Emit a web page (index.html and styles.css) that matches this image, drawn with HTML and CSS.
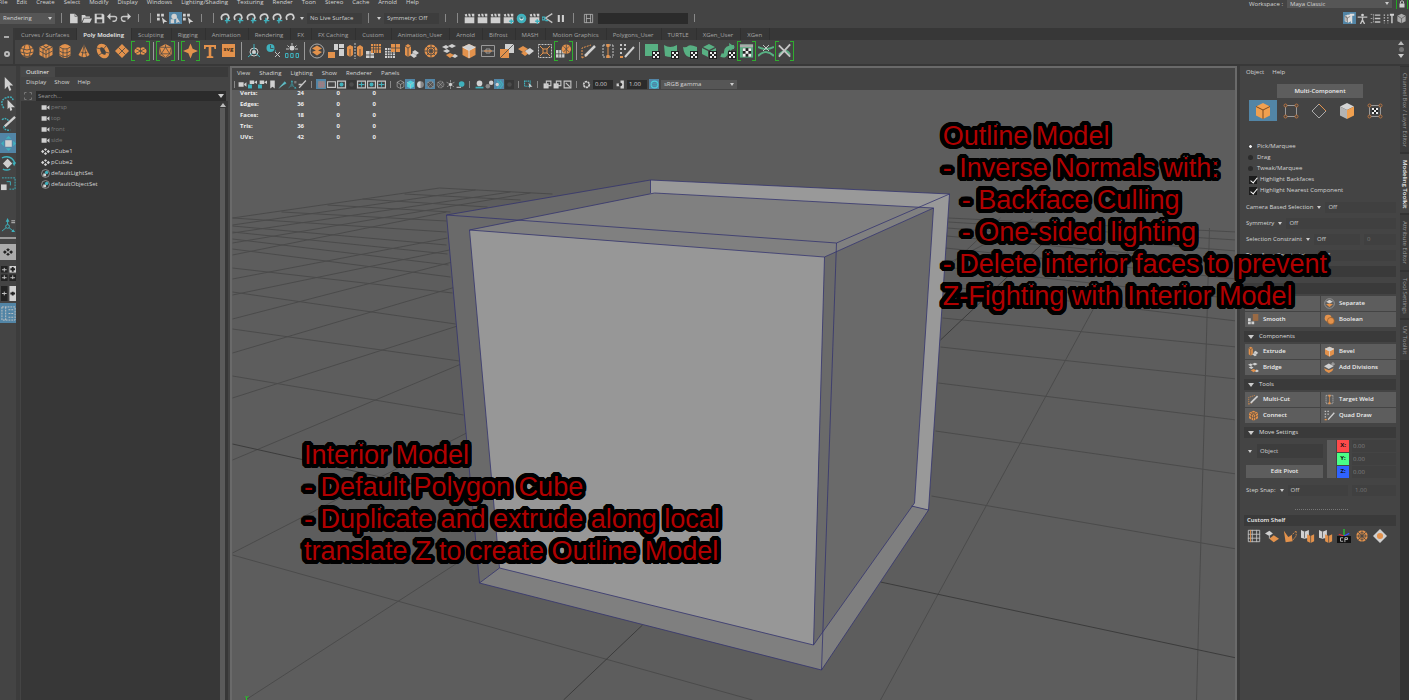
FILE: index.html
```html
<!DOCTYPE html>
<html lang="en">
<head>
  <meta charset="UTF-8">
  <meta name="viewport" content="width=device-width, initial-scale=1.0">
  <title>Outline Model</title>
  <link rel="stylesheet" href="styles.css">
</head>
<body>
  <!-- icon sprite -->
  <svg class="sprite" aria-hidden="true">
    <symbol id="sphere" viewBox="0 0 16 16"><circle class="o" cx="8" cy="8" r="6.500"/><path class="ln" d="M2 5.500q6 3 12 0M1.500 9q6.500 3 13 0M3 12.500q5 2 10 0M6 2q-3 6 0 12M10 2q3 6 0 12"/></symbol>
    <symbol id="cube" viewBox="0 0 16 16"><path class="o" d="M8 1l6.500 3v8L8 15.500 1.500 12V4z"/><path class="ln" d="M1.500 4L8 7.500 14.500 4M8 7.500v8M1.500 8L8 11.500 14.500 8M4.700 2.500L11 6v8M11.300 2.500L5 6v8"/></symbol>
    <symbol id="cylinder" viewBox="0 0 16 16"><path class="o" d="M2.500 3.500q5.500-5 11 0v9q-5.500 5-11 0z"/><path class="ln" d="M2.500 4q5.500 4 11 0M2.500 8q5.500 4 11 0M2.500 11.500q5.500 4 11 0M6 6v9M10 6v9"/></symbol>
    <symbol id="cone" viewBox="0 0 16 16"><path class="o" d="M8 1.500l5.500 10.500q-5.500 4.500-11 0z"/><path class="ln" d="M8 2L6 14M8 2l2.500 12M4.500 9q3.500 2 7 0"/></symbol>
    <symbol id="torus" viewBox="0 0 16 16"><ellipse cx="8" cy="8" rx="4" ry="6" transform="rotate(-30 8 8)" fill="none" stroke="#e3924c" stroke-width="3.500"/><path class="ln" d="M2 5l4 1M4 12l3-2M14 10l-4-1M11 3L8.500 6"/></symbol>
    <symbol id="plane" viewBox="0 0 16 16"><path class="o" d="M8 1l7 7-7 7-7-7z"/><path class="ln" d="M4.500 4.500l7 7M11.500 4.500l-7 7"/></symbol>
    <symbol id="disc" viewBox="0 0 16 16"><path class="o" d="M3 5q2-2 5 0 3-2 5 0 3 3 0 6-2 2-5 0-3 2-5 0-3-3 0-6z"/><path class="ln" d="M2 5l12 6M14 5L2 11M8 5v6"/></symbol>
    <symbol id="platonic" viewBox="0 0 16 16"><path class="o" d="M8 .5L14.500 4v8L8 15.500 1.500 12V4z"/><path class="ln" d="M8 1v3L3.500 11h9L8 4M1.500 4L8 4l6.500 0M1.500 4l2 7L8 15l4.500-4 2-7M1.500 12l2-1M14.500 12l-2-1"/></symbol>
    <symbol id="star" viewBox="0 0 16 16"><path class="o" d="M8 0l2.300 5.700L16 8l-5.700 2.300L8 16l-2.300-5.700L0 8l5.700-2.300z"/></symbol>
    <symbol id="type" viewBox="0 0 16 16"><path class="o" d="M2 2h12v4h-1.500L12 4H9.300v9l2 .6V15H4.700v-1.400l2-.6V4H4l-.5 2H2z"/></symbol>
    <symbol id="axis" viewBox="0 0 16 16"><circle cx="8" cy="9" r="4" fill="none" stroke="#ccc"/><path class="lt" d="M8 1v7M8 9l-6 5M8 9l6 5"/><circle class="w" cx="8" cy="9" r="2"/></symbol>
    <symbol id="clockx" viewBox="0 0 16 16"><circle class="t" cx="5.500" cy="5" r="4"/><path class="ln" d="M5.500 2v3.500h3"/><path class="lt" d="M10 8h2" stroke-dasharray="1 1"/><path class="lw" d="M10 9l5 5M15 9l-5 5"/></symbol>
    <symbol id="gear" viewBox="0 0 16 16"><circle class="w" cx="8" cy="5" r="2.500"/><path class="lw" d="M8 0v2M3.500 2.500L5 4M12.500 2.500L11 4M2 6h3M11 6h3"/><path class="lt" d="M1.500 10.500h2.500v4H1.500zM6.700 10.500h2.500v4H6.700zM12 10.500h2.500v4H12z"/></symbol>
    <symbol id="combine" viewBox="0 0 16 16"><circle cx="8" cy="8" r="7" fill="none" stroke="#aaa"/><path class="o" d="M8 2.500L13 5.500 8 8 3 5.500zM3 9l5-2 5 2-5 3.500z"/></symbol>
    <symbol id="separate" viewBox="0 0 16 16"><circle cx="8" cy="8" r="7" fill="none" stroke="#aaa"/><path class="w" d="M8 2.500L13 5.500 8 8 3 5.500z"/><path class="o" d="M3 9l5-1 5 1-5 4z"/></symbol>
    <symbol id="blocks" viewBox="0 0 16 16"><path class="w" d="M6 1h4v6H6zM11 1h5v4h-5zM11 6h5v7h-5z"/><path class="o" d="M0 9h7v6H0z"/></symbol>
    <symbol id="mirror" viewBox="0 0 16 16"><path class="o" d="M0 4l3-2 3 1.500V12L3 14l-3-2zM10 4L13 2l3 2v8l-3 2-3-2z"/><path class="ln" d="M3 6v8M13 6v8"/><path class="lw" d="M8 0v16" stroke-dasharray="2 1"/></symbol>
    <symbol id="gridup" viewBox="0 0 16 16"><path class="w" d="M0 8h8v7H0z"/><path class="o" d="M5 1h10v9H5z"/><path class="ln" d="M7.500 1v9M10 1v9M12.500 1v9M5 3.500h10M5 6h10M0 12h8M4 8v7"/></symbol>
    <symbol id="griddn" viewBox="0 0 16 16"><path class="w" d="M0 5h10v10H0z"/><path class="o" d="M6 1h9v8H6z"/><path class="ln" d="M2.500 5v10M5 5v10M7.500 9v6M0 7.500h6M0 10h10M0 12.500h10M10.500 1v8M6 5h9"/></symbol>
    <symbol id="extrude" viewBox="0 0 16 16"><path class="o" d="M1 3l3-2 3 2v9l-3 2-3-2z"/><path class="ln" d="M1 3l3 2 3-2M4 5v9"/><path class="w" d="M8 9l3-2 4 3-3 2zM6 12l3-2 4 3-3 2z"/></symbol>
    <symbol id="wheel" viewBox="0 0 16 16"><circle class="o" cx="8" cy="8" r="6.500"/><g class="ln"><circle cx="8" cy="8" r="4"/><circle cx="8" cy="8" r="1.500"/><path d="M8 1v14M1 8h14M3 3l10 10M13 3L3 13"/></g></symbol>
    <symbol id="bridge" viewBox="0 0 16 16"><path class="w" d="M0 4l4-2 3 2-3 2zM6 3l4-2 4 2-4 2zM9 13l4-2 3 2-3 2zM1 8l4-2 3 2-3 2z"/><path class="o" d="M4 12l4-2 4 2-4 3z"/></symbol>
    <symbol id="bevel" viewBox="0 0 16 16"><path class="o" d="M8 1l6.500 3v8L8 15.500 1.500 12V4z"/><path class="w" d="M8 1l6.500 3L8 7.500 1.500 4z"/><path d="M1.500 4L8 7.500 14.500 4M8 8v7" fill="none" stroke="#ddd"/></symbol>
    <symbol id="connect" viewBox="0 0 16 16"><path d="M1.500 2.500h13v11h-13zM1.500 8h13M6 6h4v4H6z" fill="none" stroke="#999"/><path d="M4 8h8" stroke="#e3924c"/></symbol>
    <symbol id="tri" viewBox="0 0 16 16"><path class="w" d="M6 1h9v9H6z"/><path class="o" d="M1 6h9v9H1z"/><path class="ln" d="M1 15L15 1"/></symbol>
    <symbol id="wedge" viewBox="0 0 16 16"><path class="o" d="M0 6l5-3 5 3-5 3zM3 10l4-2 4 2-4 3z"/><path class="w" d="M7 8l5-3 4 3-5 4z"/></symbol>
    <symbol id="planes" viewBox="0 0 16 16"><path class="w" d="M0 5l5-3 4 3-4 3z"/><path class="lw" d="M5 8v3"/><path class="o" d="M5 11l5-4 6 4-6 4z"/></symbol>
    <symbol id="lattice" viewBox="0 0 16 16"><path class="lw" d="M1.500 1.500h13v13h-13z" stroke-dasharray="2 1"/><path class="lo" d="M3 3l10 10M13 3L3 13"/><path d="M6 6h4v4H6z" fill="#444" stroke="#e3924c"/></symbol>
    <symbol id="ballgrid" viewBox="0 0 16 16"><path class="w" d="M0 7h9v8H0z"/><circle class="o" cx="11" cy="6" r="5"/><path class="ln" d="M3 7v8M6 7v8M0 11h9M8 3l6 6M14 3L8 9M11 1v10"/></symbol>
    <symbol id="knife" viewBox="0 0 16 16"><path class="lo" d="M1 15V5l9-3M1 15l6-3" stroke-dasharray="2 1"/><path d="M4 13L14 3" stroke="#d0d0d0" stroke-width="2.500"/></symbol>
    <symbol id="weld" viewBox="0 0 16 16"><path class="lw" d="M3 2v12M13 2v12M3 2h10M3 14h10" stroke-dasharray="2 1"/><path class="lo" d="M8 2v12"/><path class="o" d="M6.500 1h3v3h-3zM6.500 12h3v3h-3z"/></symbol>
    <symbol id="quad" viewBox="0 0 16 16"><path class="lw" d="M1 2h8M1 6h6M1 10h4" stroke-dasharray="2 2" stroke-width="2"/><path class="o" d="M1 13h3v2H1z"/><path d="M6 14L15 4" stroke="#d0d0d0" stroke-width="2"/></symbol>
    <symbol id="checker" viewBox="0 0 16 16"><path fill="#222" d="M8 8h8v8H8z"/><path fill="#eee" d="M9 9h2v2H9zM13 9h2v2h-2zM11 11h2v2h-2zM9 13h2v2H9zM13 13h2v2h-2z"/></symbol>
    <symbol id="uv1" viewBox="0 0 16 16"><path class="g" d="M1 1h13v12H1z"/><use href="#checker"/></symbol>
    <symbol id="uv2" viewBox="0 0 16 16"><path class="g" d="M1 2q6 4 13 0v11q-6 2-12 0z"/><use href="#checker"/></symbol>
    <symbol id="uv3" viewBox="0 0 16 16"><path class="g" d="M1 4q3 1 5-1t9 1v6q-3 4-8 4-5-1-6-10z"/><use href="#checker"/></symbol>
    <symbol id="uv4" viewBox="0 0 16 16"><path class="g" d="M8 1l6 3-6 3-6-3zM1 5l6 3v6l-6-3zM9 8l6-3v6l-6 3z"/><use href="#checker"/></symbol>
    <symbol id="uv5" viewBox="0 0 16 16"><path d="M1 12q5 2 5-3t8-5" fill="none" stroke="#58b083" stroke-width="4"/><path class="g" d="M9 0l6 4-5 4z"/><use href="#checker"/></symbol>
    <symbol id="uvwin" viewBox="0 0 16 16"><path class="g" d="M1 1h14v14H1z"/><path fill="#aaa" d="M1 1h14v3H1z"/><path fill="#222" d="M4 5h9v9H4z"/><path fill="#eee" d="M4 5h3v3H4zM10 5h3v3h-3zM7 8h3v3H7zM4 11h3v3H4zM10 11h3v3h-3z"/></symbol>
    <symbol id="uvcross" viewBox="0 0 16 16"><path d="M0 4q8 4 16 0M0 13q8-8 16 0" fill="none" stroke="#58b083" stroke-width="2"/><path class="lw" d="M5 2l6 6M11 2L5 8"/></symbol>
    <symbol id="uvcut" viewBox="0 0 16 16"><path d="M2 12q8-8 12 0" fill="none" stroke="#58b083" stroke-width="2"/><path class="lw" stroke-width="2" d="M2 2l12 12M14 1L2 14"/></symbol>
    <!-- status line -->
    <symbol id="new" viewBox="0 0 16 16"><path class="w" d="M3 1h7l4 4v10H3z"/><path class="ln" d="M10 1v4h4"/></symbol>
    <symbol id="open" viewBox="0 0 16 16"><path class="w" d="M1 3h5l1 2h6v2H4l-3 6zM4.500 8H16l-3 6H2z"/></symbol>
    <symbol id="save" viewBox="0 0 16 16"><path class="w" d="M1 1h12l2 2v12H1z"/><path fill="#444" d="M4 2h7v4H4zM4 9h8v5H4z"/></symbol>
    <symbol id="undo" viewBox="0 0 16 16"><path class="lw" stroke-width="2" d="M3 5h8q3 0 3 3t-3 4H8"/><path class="w" d="M5 0v10L0 5z"/></symbol>
    <symbol id="redo" viewBox="0 0 16 16"><path class="lw" stroke-width="2" d="M13 5H5q-3 0-3 3t3 4h3"/><path class="w" d="M11 0v10l5-5z"/></symbol>
    <symbol id="picker" viewBox="0 0 16 16"><path class="w" d="M0 1h4v4H0zM6 1h4v4H6zM0 7h4v4H0zM7 6l8 7h-4l-2 3z"/></symbol>
    <symbol id="pickobj" viewBox="0 0 16 16"><circle class="w" cx="6" cy="5" r="4"/><path class="w" d="M1 9h5v6H1zM9 5l6 9-3-1-3 2z"/></symbol>
    <symbol id="magnet" viewBox="0 0 16 16"><path d="M3 10Q0 4 6 2t7 5l-2 3" fill="none" stroke="#d0d0d0" stroke-width="2.500"/></symbol>
    <symbol id="magnett" viewBox="0 0 16 16"><use href="#magnet"/><path class="lt" stroke-width="2" d="M7 11h8M10 7v8"/></symbol>
    <symbol id="clap" viewBox="0 0 16 16"><path class="w" d="M1 6h14v9H1zM1 2l3-1 1 4H2zM6 1l3 0 1 4H7zM11 1h4v4h-3z"/></symbol>
    <symbol id="claps" viewBox="0 0 16 16"><use href="#clap"/><path class="lt" stroke-width="2" d="M9 12h7M12 9v7"/></symbol>
    <symbol id="render" viewBox="0 0 16 16"><circle cx="8" cy="8" r="5" fill="#ddd" stroke="#3fb1bd" stroke-width="4"/><circle cx="8" cy="7" r="2" fill="#287a85"/></symbol>
    <symbol id="cut" viewBox="0 0 16 16"><path class="lw" stroke-width="2" d="M4 8l11-7M6 8l9 6"/><path class="lt" stroke-width="2" d="M0 6h4v4H0zM5 11h4"/></symbol>
    <symbol id="pause" viewBox="0 0 16 16"><path class="w" d="M4 3h3v10H4zM10 3h3v10h-3z"/></symbol>
    <symbol id="window" viewBox="0 0 16 16"><path class="lw" d="M2 2h12v12H2zM5 2v12M11 2v12M5 8h6"/></symbol>
    <symbol id="lock" viewBox="0 0 16 16"><path class="w" d="M3 7h10v8H3z"/><path class="lw" stroke-width="2" d="M5 7V3q3-3 6 0v4"/></symbol>
    <symbol id="toolbench" viewBox="0 0 16 16"><path fill="#ddd" d="M1 4l5-2 4 2v8l-4 2-5-2zM8 1h7v3h-3v11h-2V4H8z"/><path class="ln" d="M1 5l4 2 4-2M5 7v7M3 4v8"/></symbol>
    <symbol id="person" viewBox="0 0 16 16"><circle class="w" cx="8" cy="3" r="2"/><path class="lw" stroke-width="2" d="M1 6h14M8 5v5M5 16l3-6 3 6"/></symbol>
    <symbol id="sliders" viewBox="0 0 16 16"><path class="lw" d="M1 2h4M1 8h4M1 14h4M5 2v12" stroke-dasharray="2 1"/><path class="lw" stroke-width="2" d="M7 3h8M7 8h8M7 13h8"/></symbol>
    <symbol id="brushes" viewBox="0 0 16 16"><path class="lw" stroke-width="2" stroke-dasharray="2 2" d="M2 2v13M7 2v13"/><path class="w" d="M10 1h6v3h-2v11h-2V4h-2z"/></symbol>
    <symbol id="ghost" viewBox="0 0 16 16"><path fill="#aaa" d="M8 1l6 3v8l-6 3-6-3V4z"/><path class="ln" d="M2 4l6 4 6-4M8 8v7"/></symbol>
    <!-- tool box -->
    <symbol id="arrow" viewBox="0 0 16 16"><path class="w" d="M4 1l9 9H9l2 5-2 1-2-5-3 3z"/></symbol>
    <symbol id="lasso" viewBox="0 0 16 16"><path class="lt" stroke-width="1.500" stroke-dasharray="2 1" d="M3 13Q-2 5 5 2t8 3"/><path class="w" d="M7 4l8 8h-4l1 3-2 1-1-4-2 2z"/></symbol>
    <symbol id="brush" viewBox="0 0 16 16"><path class="lt" stroke-width="1.500" stroke-dasharray="2 1" d="M1 4q4-3 7 1M3 11q0 5 7 4"/><path d="M4 11L15 1" stroke="#d0d0d0" stroke-width="2.500"/></symbol>
    <symbol id="move" viewBox="0 0 16 16"><path class="w" d="M4.500 4.500h7v7h-7z"/><path class="t" d="M8 0l3 3H5zM8 16l3-3H5zM0 8l3-3v6zM16 8l-3-3v6z"/></symbol>
    <symbol id="rotate" viewBox="0 0 16 16"><path class="w" d="M7 3l5 5-5 5-5-5z"/><path class="lt" stroke-width="1.500" d="M1 2q10-4 14 6M2 14q4 2 8 0"/><path class="t" d="M12 7h4l-2 4z"/></symbol>
    <symbol id="scale" viewBox="0 0 16 16"><path class="lt" stroke-dasharray="2 1" d="M1 2h14v12H8"/><path class="lt" d="M6 6h4v4"/><path class="w" d="M0 9h6v6H0z"/></symbol>
    <symbol id="joint" viewBox="0 0 16 16"><path class="lt" d="M7 3v6l-6 5M7 9l6 5"/><circle cx="7" cy="9" r="2" fill="#444" stroke="#3fb1bd"/><path class="t" d="M5 4l2-4 2 4zM13 12l2 3h-4z"/><path class="lw" d="M11 3h4M11 5h4"/></symbol>
    <symbol id="mesh" viewBox="0 0 16 16"><path fill="currentColor" d="M8 2l3 2-3 3-3-3zM3 5l3 3-3 3-3-3zM13 5l3 3-3 3-3-3zM8 9l3 3-3 2-3-2z"/></symbol>
    <symbol id="four" viewBox="0 0 16 16"><path fill="#222" d="M0 0h7v7H0zM0 9h7v7H0zM9 9h7v7H9z"/><path class="w" d="M9 0h7v7H9z"/><path class="lw" d="M1 4h5M3.500 2v4M1 12.500h5M3.500 10v4M10 12.500h5M12.500 10v4"/><path stroke="#222" stroke-width="2" d="M10 3.500h5M12.500 1v5"/></symbol>
    <symbol id="two" viewBox="0 0 16 16"><path fill="#222" d="M0 0h7v16H0z"/><path class="w" d="M9 0h7v16H9z"/><path class="lw" d="M1 8h5M3.500 6v4"/><path stroke="#222" stroke-width="2" d="M10 8h5M12.500 6v4"/></symbol>
    <symbol id="outl" viewBox="0 0 16 16"><path class="lw" stroke-dasharray="2 1" d="M1 1h14v14H1zM5 1v14M8 4h5M8 8h5M8 12h5"/></symbol>
    <!-- outliner and panel bar -->
    <symbol id="cam" viewBox="0 0 16 16"><path class="w" d="M1 4h9v8H1zM11 7l4-3v8l-4-3z"/></symbol>
    <symbol id="camt" viewBox="0 0 16 16"><path class="w" d="M3 1h8v6H3zM11 4l5-3v6z"/><path class="t" d="M0 8h7v7H0z"/></symbol>
    <symbol id="set" viewBox="0 0 16 16"><circle cx="8" cy="8" r="7" fill="none" stroke="#ccc"/><path class="w" d="M4 8h5v5H4z"/><circle class="t" cx="10" cy="6" r="3"/></symbol>
    <symbol id="focus" viewBox="0 0 16 16"><path d="M1 5V1h4M11 1h4v4M15 11v4h-4M5 15H1v-4" fill="none" stroke="#777" stroke-width="2"/></symbol>
    <symbol id="mark" viewBox="0 0 16 16"><path class="w" d="M4 1h8v14l-4-3-4 3z"/></symbol>
    <symbol id="pen" viewBox="0 0 16 16"><path class="t" d="M1 14L12 2l3 4z"/><path class="lw" d="M2 15L13 4"/></symbol>
    <symbol id="bpen" viewBox="0 0 16 16"><path class="lw" stroke-width="2.500" d="M2 14L14 1M1 8h6"/></symbol>
    <symbol id="gridbox" viewBox="0 0 16 16"><path fill="#888" d="M2 2h12v12H2z"/><path d="M2 6h12M2 10h12M6 2v12M10 2v12" stroke="#a78"/></symbol>
    <symbol id="gate" viewBox="0 0 16 16"><path class="lw" stroke-width="2" d="M1 3h14v10H1z"/></symbol>
    <symbol id="gatet" viewBox="0 0 16 16"><path class="lw" stroke-width="2" d="M1 2h14v12H1z"/><circle class="t" cx="8" cy="8" r="3.500"/></symbol>
    <symbol id="gatex" viewBox="0 0 16 16"><path class="lw" stroke-width="2" d="M1 2h14v12H1z"/><path class="lt" stroke-width="2" d="M3 8h10M8 4v8"/></symbol>
    <symbol id="isolate" viewBox="0 0 16 16"><path class="lw" stroke-width="2" d="M2 2h12v12H2zM5 5l7 7"/></symbol>
    <symbol id="faint" viewBox="0 0 16 16"><path fill="#373737" d="M0 0h16v16H0z"/><circle cx="8" cy="8" r="4" fill="#4c4c4c"/></symbol>
    <symbol id="wire" viewBox="0 0 16 16"><path class="lw" d="M8 1l6 3v8l-6 3-6-3V4zM2 4l6 4 6-4M8 8v7"/></symbol>
    <symbol id="shade" viewBox="0 0 16 16"><path fill="#4fd0dc" d="M8 1l6 3v8l-6 3-6-3V4z"/><path class="lw" d="M2 4l6 4 6-4M8 8v7"/></symbol>
    <symbol id="half" viewBox="0 0 16 16"><circle cx="8" cy="8" r="6" fill="#888"/><path class="w" d="M8 2a6 6 0 0 0 0 12z"/></symbol>
    <symbol id="tex" viewBox="0 0 16 16"><circle cx="8" cy="8" r="6" fill="#555" stroke="#bbb" stroke-dasharray="2 1"/><path class="lw" stroke-dasharray="2 1" d="M4 4l8 8M12 4l-8 8"/></symbol>
    <symbol id="bulb" viewBox="0 0 16 16"><circle class="w" cx="8" cy="8" r="3"/><path class="lw" d="M8 0v4M1 4l4 2M15 4l-4 2M8 11v5M2 12l3-2M14 12l-3-2"/></symbol>
    <symbol id="shadow" viewBox="0 0 16 16"><circle class="t" cx="10" cy="7" r="5"/><path class="lw" stroke-width="2" d="M1 13h8"/></symbol>
    <symbol id="ball" viewBox="0 0 16 16"><circle class="w" cx="8" cy="6" r="5"/><path class="t" d="M1 12h14v3H1z"/></symbol>
    <symbol id="balls" viewBox="0 0 16 16"><circle cx="5" cy="11" r="4" fill="#888"/><circle class="w" cx="11" cy="5" r="4"/></symbol>
    <symbol id="aa" viewBox="0 0 16 16"><path class="lt" stroke-width="2" d="M4 1l6 7-6 7M9 1l5 7-5 7"/><circle class="w" cx="4" cy="8" r="3"/></symbol>
    <symbol id="sel" viewBox="0 0 16 16"><path class="lt" stroke-width="2" stroke-dasharray="2 1" d="M1 2h10v9H1z"/><path class="w" d="M8 5l7 7h-4l-1 3z"/></symbol>
    <symbol id="copy" viewBox="0 0 16 16"><path class="w" d="M1 6h9v9H1z"/><path class="lw" stroke-width="2" d="M6 2h8v8H6z"/></symbol>
    <symbol id="shutter" viewBox="0 0 16 16"><circle cx="8" cy="8" r="5" fill="none" stroke="#d0d0d0" stroke-width="3" stroke-dasharray="4 1"/></symbol>
    <symbol id="gamma" viewBox="0 0 16 16"><path class="w" d="M8 1h6v14H8zM1 6h5v5H1z"/><circle cx="8" cy="8" r="3" fill="#333"/></symbol>
    <symbol id="srgb" viewBox="0 0 16 16"><circle cx="8" cy="8" r="6" fill="none" stroke="#4fd0dc" stroke-width="2"/><path class="lt" d="M2 6h12M2 10h12"/></symbol>
    <!-- modeling toolkit -->
    <symbol id="mkobj" viewBox="0 0 16 16"><path fill="#f0a050" d="M8 0l7 3.500v9L8 16l-7-3.500v-9z"/><path d="M1 3.500L8 7l7-3.500M8 7v9" fill="none" stroke="#7a4a20"/></symbol>
    <symbol id="mkvert" viewBox="0 0 16 16"><path d="M2.500 2.500h11v11h-11z" fill="none" stroke="#999"/><g fill="#444" stroke="#b87340"><circle cx="2.500" cy="2.500" r="1.500"/><circle cx="13.500" cy="2.500" r="1.500"/><circle cx="2.500" cy="13.500" r="1.500"/><circle cx="13.500" cy="13.500" r="1.500"/></g></symbol>
    <symbol id="mkedge" viewBox="0 0 16 16"><path d="M8 1L1 8l7 7 7-7" fill="none" stroke="#aaa"/><path d="M8 1l7 7" stroke="#e3924c"/></symbol>
    <symbol id="mkface" viewBox="0 0 16 16"><path fill="#d4d4d4" d="M8 0l7 3.500L8 7 1 3.500z"/><path fill="#b4b4b4" d="M1 3.500L8 7v9l-7-3.500z"/><path fill="#f0a050" d="M15 3.500L8 7v9l7-3.500z"/></symbol>
    <symbol id="mkuv" viewBox="0 0 16 16"><use href="#mkvert"/><path fill="#222" d="M5 5h6v6H5z"/><path fill="#eee" d="M5 5h2v2H5zM9 5h2v2H9zM7 7h2v2H7zM5 9h2v2H5zM9 9h2v2H9z"/></symbol>
    <symbol id="bool" viewBox="0 0 16 16"><circle class="o" cx="6" cy="6" r="5"/><circle cx="10" cy="10" r="5" fill="#e3924c" stroke="#8a5628"/></symbol>
    <symbol id="smooth" viewBox="0 0 16 16"><path fill="#9a6a44" d="M7 0h8v10H7z"/><path class="w" d="M0 6h4v4H0zM0 11h4v4H0zM5 11h4v4H5z"/></symbol>
    <symbol id="divs" viewBox="0 0 16 16"><path class="w" d="M0 6l7-4 7 4-7 4z"/><path class="o" d="M0 9l7 3 7-3-2 4-5 3-5-3z"/><path class="lw" d="M13 0v6M10 3h6"/></symbol>
    <symbol id="lat2" viewBox="0 0 16 16"><path class="lw" d="M1.500 1.500h13v13h-13zM6 1v14M11 1v14M1 6h14M1 10.500h14"/><path class="lo" d="M4 1v14"/></symbol>
    <symbol id="bend" viewBox="0 0 16 16"><path class="o" d="M1 2l5 7 4-2 1 7-8 1z"/><path class="lo" stroke-dasharray="2 1" d="M9 8l6-6v6l-4 5"/></symbol>
    <symbol id="banner" viewBox="0 0 16 16"><path class="w" d="M0 1l4 2 5-2v9l-5 1-4-1z"/><path class="o" d="M7 6l4 2 4-2v8l-4 2-4-2z"/><path class="ln" d="M4 3v7M11 8v8"/></symbol>
    <symbol id="pivot" viewBox="0 0 16 16"><path stroke="#2c3" stroke-width="1.500" d="M8 0v8"/><path stroke="#d33" stroke-width="1.500" d="M8 8l-6-2"/><path stroke="#35f" stroke-width="1.500" d="M8 8l6-3"/><path fill="#111" d="M0 8h16v8H0z"/><path class="lw" d="M7 10H4v4h3M9 15v-5h3v2H9"/></symbol>
    <symbol id="diamond" viewBox="0 0 16 16"><path class="w" d="M8 0l8 8-8 8-8-8z"/><circle class="o" cx="8" cy="8" r="3.500"/></symbol>
  </svg>

  <nav class="menubar">
    <a href="#">File</a><a href="#">Edit</a><a href="#">Create</a><a href="#">Select</a><a href="#">Modify</a><a href="#">Display</a><a href="#">Windows</a><a href="#">Lighting/Shading</a><a href="#">Texturing</a><a href="#">Render</a><a href="#">Toon</a><a href="#">Stereo</a><a href="#">Cache</a><a href="#">Arnold</a><a href="#">Help</a>
    <div class="workspace">
      <label for="workspace">Workspace :</label>
      <span class="drop"><select id="workspace"><option>Maya Classic</option></select></span>
      <button class="lock" aria-label="Lock workspace"><svg><use href="#lock"/></svg></button>
    </div>
  </nav>

  <div class="status">
    <span class="drop menuset"><select aria-label="Menu set"><option>Rendering</option></select></span>
    <i class="bar"></i>
    <button><svg><use href="#new"/></svg></button><button><svg><use href="#open"/></svg></button><button><svg><use href="#save"/></svg></button><button><svg><use href="#undo"/></svg></button><button><svg><use href="#redo"/></svg></button>
    <i class="bar end"></i><i class="bar"></i>
    <button><svg><use href="#picker"/></svg></button><button class="on"><svg><use href="#pickobj"/></svg></button><button><svg><use href="#picker"/></svg></button>
    <i class="bar end"></i><i class="bar"></i>
    <button><svg><use href="#magnett"/></svg></button><button><svg><use href="#magnett"/></svg></button><button><svg><use href="#magnett"/></svg></button><button><svg><use href="#magnett"/></svg></button><button><svg><use href="#magnett"/></svg></button><button><svg><use href="#magnet"/></svg></button>
    <i class="caret"></i>
    <button class="field">No Live Surface</button>
    <i class="bar"></i><i class="caret"></i>
    <button class="field">Symmetry: Off</button>
    <i class="bar end"></i><i class="bar"></i>
    <button><svg><use href="#clap"/></svg></button><button><svg><use href="#clap"/></svg></button><button><svg><use href="#clap"/></svg></button><button><svg><use href="#claps"/></svg></button><button><svg><use href="#render"/></svg></button><button><svg><use href="#claps"/></svg></button><button><svg><use href="#cut"/></svg></button><button><svg><use href="#pause"/></svg></button>
    <i class="bar"></i>
    <button class="wide"><svg><use href="#window"/></svg></button>
    <input type="text" aria-label="Quick rename">
    <i class="bar end"></i>
    <div class="status-right">
      <button class="on"><svg><use href="#toolbench"/></svg></button><button><svg><use href="#person"/></svg></button><button><svg><use href="#sliders"/></svg></button><button><svg><use href="#brushes"/></svg></button><button><svg><use href="#ghost"/></svg></button>
    </div>
  </div>

  <div class="shelf">
    <div class="shelf-side"><i class="dash"></i><i class="ring"></i></div>
    <div class="shelf-body">
      <nav class="shelf-tabs">
        <a href="#">Curves / Surfaces</a><a href="#" class="active">Poly Modeling</a><a href="#">Sculpting</a><a href="#">Rigging</a><a href="#">Animation</a><a href="#">Rendering</a><a href="#">FX</a><a href="#">FX Caching</a><a href="#">Custom</a><a href="#">Animation_User</a><a href="#">Arnold</a><a href="#">Bifrost</a><a href="#">MASH</a><a href="#">Motion Graphics</a><a href="#">Polygons_User</a><a href="#">TURTLE</a><a href="#">XGen_User</a><a href="#">XGen</a>
      </nav>
      <div class="shelf-icons">
        <button><svg><use href="#sphere"/></svg></button><button><svg><use href="#cube"/></svg></button><button><svg><use href="#cylinder"/></svg></button><button><svg><use href="#cone"/></svg></button><button><svg><use href="#torus"/></svg></button><button><svg><use href="#plane"/></svg></button><button class="brk"><svg><use href="#disc"/></svg></button>
        <i class="sep"></i>
        <button class="brk"><svg><use href="#platonic"/></svg></button>
        <i class="sep"></i>
        <button class="brk"><svg><use href="#star"/></svg></button><button><svg><use href="#type"/></svg></button><button><span class="svg-tile">svg</span></button>
        <i class="sep"></i>
        <button><svg><use href="#axis"/></svg></button><button><svg><use href="#clockx"/></svg></button><button><svg><use href="#gear"/></svg></button>
        <i class="sep"></i>
        <button><svg><use href="#combine"/></svg></button><button><svg><use href="#blocks"/></svg></button><button><svg><use href="#mirror"/></svg></button><button><svg><use href="#gridup"/></svg></button><button><svg><use href="#griddn"/></svg></button><button><svg><use href="#extrude"/></svg></button><button><svg><use href="#wheel"/></svg></button><button><svg><use href="#bridge"/></svg></button><button><svg><use href="#bevel"/></svg></button><button><svg><use href="#connect"/></svg></button><button><svg><use href="#tri"/></svg></button><button><svg><use href="#wedge"/></svg></button><button><svg><use href="#lattice"/></svg></button><button class="brk"><svg><use href="#ballgrid"/></svg></button>
        <i class="sep"></i>
        <button><svg><use href="#knife"/></svg></button><button><svg><use href="#weld"/></svg></button><button><svg><use href="#quad"/></svg></button>
        <i class="sep"></i>
        <button><svg><use href="#uv1"/></svg></button><button><svg><use href="#uv2"/></svg></button><button><svg><use href="#uv3"/></svg></button><button><svg><use href="#uv4"/></svg></button><button><svg><use href="#uv5"/></svg></button><button class="brk"><svg><use href="#uvwin"/></svg></button><button><svg><use href="#uvcross"/></svg></button><button class="brk"><svg><use href="#uvcut"/></svg></button>
      </div>
    </div>
    <div class="shelf-scroll"><i class="up"></i><i class="dot"></i><i class="down"></i></div>
  </div>

  <main>
    <aside class="toolbox">
      <button><svg><use href="#arrow"/></svg></button>
      <button><svg><use href="#lasso"/></svg></button>
      <button><svg><use href="#brush"/></svg></button>
      <button class="on"><svg><use href="#move"/></svg></button>
      <button><svg><use href="#rotate"/></svg></button>
      <button><svg><use href="#scale"/></svg></button>
      <button class="last-tool"><svg><use href="#joint"/></svg></button>
      <button class="light"><svg><use href="#mesh"/></svg></button>
      <button><svg><use href="#four"/></svg></button>
      <button><svg><use href="#two"/></svg></button>
      <button class="on"><svg><use href="#outl"/></svg></button>
    </aside>

    <section class="outliner">
      <h2>Outliner</h2>
      <nav class="panel-menu"><a href="#">Display</a><a href="#">Show</a><a href="#">Help</a></nav>
      <div class="search">
        <svg><use href="#focus"/></svg>
        <div class="search-box"><input type="text" placeholder="Search..." aria-label="Search"><i class="tri-down"></i></div>
      </div>
      <div class="tree">
        <ul>
          <li class="dim"><svg><use href="#cam"/></svg>persp</li>
          <li class="dim"><svg><use href="#cam"/></svg>top</li>
          <li class="dim"><svg><use href="#cam"/></svg>front</li>
          <li class="dim"><svg><use href="#cam"/></svg>side</li>
          <li><svg><use href="#mesh"/></svg>pCube1</li>
          <li><svg><use href="#mesh"/></svg>pCube2</li>
          <li><svg><use href="#set"/></svg>defaultLightSet</li>
          <li><svg><use href="#set"/></svg>defaultObjectSet</li>
        </ul>
        <div class="scrollbar"><i class="up"></i><span></span></div>
      </div>
    </section>

    <section class="viewport">
      <nav class="panel-menu"><a href="#">View</a><a href="#">Shading</a><a href="#">Lighting</a><a href="#">Show</a><a href="#">Renderer</a><a href="#">Panels</a></nav>
      <div class="panel-bar">
        <i class="bar first"></i>
        <button><svg><use href="#cam"/></svg></button><button><svg><use href="#camt"/></svg></button><button><svg><use href="#camt"/></svg></button><button><svg><use href="#mark"/></svg></button><button><svg><use href="#pen"/></svg></button><button><svg><use href="#joint"/></svg></button><button><svg><use href="#bpen"/></svg></button>
        <i class="bar"></i>
        <button class="on"><svg><use href="#gridbox"/></svg></button><button><svg><use href="#gate"/></svg></button><button><svg><use href="#gatet"/></svg></button><button><svg><use href="#faint"/></svg></button><button><svg><use href="#gatex"/></svg></button><button><svg><use href="#gatet"/></svg></button><button><svg><use href="#gatex"/></svg></button>
        <i class="bar"></i>
        <button><svg><use href="#wire"/></svg></button><button class="on"><svg><use href="#shade"/></svg></button><button><svg><use href="#half"/></svg></button><button class="on"><svg><use href="#tex"/></svg></button><button><svg><use href="#tex"/></svg></button><button><svg><use href="#bulb"/></svg></button><button><svg><use href="#shadow"/></svg></button>
        <i class="bar"></i>
        <button><svg><use href="#ball"/></svg></button><button><svg><use href="#balls"/></svg></button><button class="on"><svg><use href="#aa"/></svg></button><button><svg><use href="#faint"/></svg></button>
        <i class="bar"></i>
        <button><svg><use href="#sel"/></svg></button>
        <i class="bar"></i>
        <button><svg><use href="#copy"/></svg></button><button><svg><use href="#copy"/></svg></button><button><svg><use href="#isolate"/></svg></button>
        <i class="bar"></i>
        <button><svg><use href="#shutter"/></svg></button>
        <input type="text" value="0.00" aria-label="Exposure">
        <button><svg><use href="#gamma"/></svg></button>
        <input type="text" value="1.00" aria-label="Gamma">
        <button class="on"><svg><use href="#srgb"/></svg></button>
        <span class="drop"><select aria-label="View transform"><option>sRGB gamma</option></select></span>
      </div>
      <div class="scene">
        <svg viewBox="231 90 1004 610" preserveAspectRatio="xMidYMid slice">
          <g class="grid">
            <path d="M439 188L552 194M404 194L520 200M362 199L487 207M327 205L450 212M281 212L446 221M232 218L446 232M232 226L446 245M232 232L447 254M232 239L448 265M232 249L450 277M232 268L452 293M232 292L455 324M232 329L459 361M232 376L463 415M232 555L752 700"/>
            <path d="M232 218L439 188M232 225L475 190M232 233L510 192M232 243L530 193M232 255L446 212M232 279L447 238M232 295L449 250M232 319L452 262M232 353L455 287M232 398L460 325M232 460L463 363M232 553L468 432M245 700L480 548"/>
            <path d="M948 218L1236 232M948 222L1236 240M947 228L1236 251M946 236L1236 263M945 248L1236 279M944 267L1236 299M943 286L1236 321M942 318L1236 347M940 347L1236 379M938 383L1236 420M935 431L1236 474M931 496L1236 549"/>
            <path d="M950 262L1032 219M880 700L1095 305 1145 222M1196 700L1209 228M943 272L1000 218"/>
          </g>
          <path class="grid-axis" d="M232 444L470 497M880 582L1236 658M563 700L642 625M940 340L1048 238"/>
          <!-- outline shell -->
          <path fill="#6a6a6a" d="M650 180L446 215 479 583 499 568 654 300z"/>
          <path fill="#999" d="M650 180L949 194 928 510 911 506 650 300z"/>
          <path fill="#7f7f7f" d="M499 568L479 583 821 670 928 510 911 506z"/>
          <!-- interior cube -->
          <path fill="#808080" d="M654 193L469 230 824 257 933 208z"/>
          <path fill="#979797" d="M469 230L824 257 813 645 499 568z"/>
          <path fill="#6a6a6a" d="M824 257L933 208 914 503 813 645z"/>
          <path class="wire" d="M650 193V180L446 215 479 583 821 670 928 510 949 194 650 180M446 215L836 243 949 194M836 243L821 670M479 583L499 568M928 510L911 506"/>
          <path class="wire" d="M654 193L469 230 824 257 933 208zM469 230L499 568 813 645 824 257M813 645L914 503 933 208"/>
          <path d="M245 696l1 2 2-2M246 698v2" fill="none" stroke="#2c2"/>
        </svg>
        <table class="hud">
          <tr><th>Verts:</th><td>24</td><td>0</td><td>0</td></tr>
          <tr><th>Edges:</th><td>36</td><td>0</td><td>0</td></tr>
          <tr><th>Faces:</th><td>18</td><td>0</td><td>0</td></tr>
          <tr><th>Tris:</th><td>36</td><td>0</td><td>0</td></tr>
          <tr><th>UVs:</th><td>42</td><td>0</td><td>0</td></tr>
        </table>
        <div class="note note-interior">Interior Model
- Default Polygon Cube
- Duplicate and extrude along local
translate Z to create Outline Model</div>
        <div class="note note-outline">Outline Model
- Inverse Normals with:
<span class="indent">- Backface Culling</span>
<span class="indent">- One-sided lighting</span>
- Delete interior faces to prevent
Z-Fighting with Interior Model</div>
      </div>
    </section>

    <aside class="toolkit">
      <nav class="panel-menu"><a href="#">Object</a><a href="#">Help</a></nav>
      <button class="multi">Multi-Component</button>
      <div class="modes">
        <button class="on"><svg><use href="#mkobj"/></svg></button><button><svg><use href="#mkvert"/></svg></button><button><svg><use href="#mkedge"/></svg></button><button><svg><use href="#mkface"/></svg></button><button><svg><use href="#mkuv"/></svg></button>
      </div>
      <div class="options">
        <label><input type="radio" name="pick" checked>Pick/Marquee</label>
        <label><input type="radio" name="pick">Drag</label>
        <label><input type="radio" name="pick">Tweak/Marquee</label>
        <label class="check"><input type="checkbox" checked>Highlight Backfaces</label>
        <label class="check"><input type="checkbox" checked>Highlight Nearest Component</label>
      </div>
      <div class="constraints">
        <div class="row"><span>Camera Based Selection</span><i class="caret"></i><button class="field">Off</button></div>
        <div class="row"><span>Symmetry</span><i class="caret"></i><button class="field">Off</button></div>
        <div class="row"><span>Selection Constraint</span><i class="caret"></i><button class="field">Off</button><input type="text" value="0" aria-label="Constraint angle"></div>
        <div class="row"><span>Transform Constraint</span><i class="caret"></i><button class="field">Off</button></div>
      </div>
      <div class="strip"></div>
      <h3 aria-label="Mesh"><i class="tri-down"></i></h3>
      <div class="cmds">
        <button aria-label="Combine"><svg><use href="#combine"/></svg></button><button><svg><use href="#separate"/></svg>Separate</button>
        <button><svg><use href="#smooth"/></svg>Smooth</button><button><svg><use href="#bool"/></svg>Boolean</button>
      </div>
      <h3><i class="tri-down"></i>Components</h3>
      <div class="cmds">
        <button><svg><use href="#extrude"/></svg>Extrude</button><button><svg><use href="#bevel"/></svg>Bevel</button>
        <button><svg><use href="#bridge"/></svg>Bridge</button><button><svg><use href="#divs"/></svg>Add Divisions</button>
      </div>
      <h3><i class="tri-down"></i>Tools</h3>
      <div class="cmds">
        <button><svg><use href="#knife"/></svg>Multi-Cut</button><button><svg><use href="#weld"/></svg>Target Weld</button>
        <button><svg><use href="#cube"/></svg>Connect</button><button><svg><use href="#quad"/></svg>Quad Draw</button>
      </div>
      <h3><i class="tri-down"></i>Move Settings</h3>
      <div class="move">
        <div class="pivot">
          <div class="pivot-row"><i class="caret"></i><button class="field">Object</button></div>
          <button class="edit-pivot">Edit Pivot</button>
        </div>
        <div class="handle"></div>
        <div class="axes">
          <label class="x"><b>X:</b><input type="text" value="0.00"></label>
          <label class="y"><b>Y:</b><input type="text" value="0.00"></label>
          <label class="z"><b>Z:</b><input type="text" value="0.00"></label>
        </div>
      </div>
      <div class="row snap"><span>Step Snap:</span><i class="caret"></i><button class="field">Off</button><input type="text" value="1.00" aria-label="Step size"></div>
      <div class="grip"></div>
      <h3 class="custom">Custom Shelf</h3>
      <div class="custom-shelf">
        <button><svg><use href="#lat2"/></svg></button><button><svg><use href="#planes"/></svg></button><button><svg><use href="#bend"/></svg></button><button><svg><use href="#banner"/></svg></button><button><svg><use href="#banner"/></svg></button><button><svg><use href="#pivot"/></svg></button><button><svg><use href="#wheel"/></svg></button><button><svg><use href="#diamond"/></svg></button>
      </div>
    </aside>

    <nav class="side-tabs">
      <a href="#">Channel Box / Layer Editor</a>
      <a href="#" class="active">Modeling Toolkit</a>
      <a href="#">Attribute Editor</a>
      <a href="#">Tool Settings</a>
      <a href="#">UV Toolkit</a>
    </nav>
  </main>
</body>
</html>
```
FILE: styles.css
```css
* {
  box-sizing: border-box;
}

body {
  margin: 0;
  height: 100vh;
  display: flex;
  flex-direction: column;
  overflow: hidden;
  background: #444;
  color: #d4d4d4;
  font-family: "Open Sans", "Noto Sans", sans-serif;
  font-size: 6px;
  line-height: 11px;
}

a {
  color: inherit;
  text-decoration: none;
  white-space: nowrap;
}

button,
input,
select {
  margin: 0;
  padding: 0;
  border: 0;
  border-radius: 0;
  background: none;
  color: inherit;
  font: inherit;
  appearance: none;
}

button {
  display: flex;
  align-items: center;
  justify-content: center;
  flex: none;
  white-space: nowrap;
}

svg {
  display: block;
  flex: none;
}

i {
  flex: none;
}

.sprite {
  position: absolute;
  width: 0;
  height: 0;
}

/* icon paints */
.o { fill: #e3924c; }
.w { fill: #d0d0d0; }
.t { fill: #3fb1bd; }
.g { fill: #58b083; }
.ln { fill: none; stroke: #444; stroke-width: 0.8px; }
.lw { fill: none; stroke: #c4c4c4; }
.lt { fill: none; stroke: #3fb1bd; }
.lo { fill: none; stroke: #e3924c; }

.on {
  background: #5285a6;
}

/* small shared shapes */
.bar {
  width: 12px;
  height: 10px;
  background: linear-gradient(#888, #888) center / 1px 100% no-repeat;
}

.bar.end {
  height: 8px;
}

.caret,
.tri-down,
.down,
.drop::after {
  display: block;
  width: 0;
  height: 0;
  border: 2px solid transparent;
  border-top: 3px solid #ccc;
  border-bottom: 0;
}

.tri-down,
.down {
  border-width: 3px;
  border-top-width: 4px;
  border-bottom: 0;
}

.up {
  display: block;
  width: 0;
  height: 0;
  border: 3px solid transparent;
  border-bottom: 4px solid #bbb;
  border-top: 0;
}

.drop {
  display: flex;
  align-items: center;
  background: #565656;
}

.drop select {
  flex: 1;
  min-width: 0;
  padding-left: 3px;
}

.drop::after {
  content: "";
  margin-right: 3px;
}

.field {
  justify-content: flex-start;
  background: #3d3d3d;
  color: #d0d0d0;
}

/* top menu */
.menubar {
  display: flex;
  align-items: flex-end;
  gap: 9px;
  height: 8px;
  margin-left: -2px;
  line-height: 12px;
}

.workspace {
  display: flex;
  align-items: center;
  gap: 4px;
  height: 9px;
  margin-left: auto;
}

.workspace .drop {
  width: 105px;
  height: 9px;
}

.lock {
  width: 12px;
  height: 10px;
  margin-right: 1px;
  border: solid #2a2;
  border-width: 0 1px;
}

.lock svg {
  width: 8px;
  height: 8px;
}

/* status line */
.status {
  display: flex;
  align-items: center;
  height: 20px;
}

.status .menuset {
  width: 55px;
  height: 11px;
}

.status > button,
.status-right button {
  width: 13px;
  height: 12px;
}

.status svg {
  width: 11px;
  height: 11px;
}

.status .caret {
  margin: 0 3px;
}

.status > .field {
  width: 55px;
  height: 11px;
  padding-left: 3px;
}

.status > .wide {
  width: 19px;
}

.status input {
  width: 90px;
  height: 11px;
  background: #2b2b2b;
}

.status-right {
  display: flex;
  margin-left: auto;
  padding-right: 1px;
}

/* shelf */
.shelf {
  display: flex;
  height: 38px;
  border-bottom: 2px solid #383838;
}

.shelf-side {
  display: flex;
  flex-direction: column;
  align-items: center;
  justify-content: space-between;
  width: 15px;
  padding: 8px 0 7px;
  border-right: 2px solid #383838;
}

.dash {
  width: 5px;
  height: 2px;
  background: #aaa;
}

.ring {
  width: 6px;
  height: 6px;
  border: 2px solid #bbb;
  border-radius: 50%;
}

.shelf-body {
  flex: 1;
  min-width: 0;
}

.shelf-tabs {
  display: flex;
  height: 12px;
  background: #373737;
  color: #a4a4a4;
  line-height: 14px;
}

.shelf-tabs a {
  padding: 0 7px 0 6px;
  border-right: 1px solid #303030;
}

.shelf-tabs .active {
  background: #444;
  color: #eee;
  font-weight: 600;
}

.shelf-icons {
  display: flex;
  align-items: center;
  height: 21px;
  padding-left: 2px;
}

.shelf-icons button {
  width: 19px;
  height: 20px;
}

.shelf-icons svg {
  width: 16px;
  height: 16px;
}

.shelf-icons .brk {
  background:
    linear-gradient(#2fae2f, #2fae2f) left top / 3px 1px no-repeat,
    linear-gradient(#2fae2f, #2fae2f) left bottom / 3px 1px no-repeat,
    linear-gradient(#2fae2f, #2fae2f) right top / 3px 1px no-repeat,
    linear-gradient(#2fae2f, #2fae2f) right bottom / 3px 1px no-repeat;
  border: solid #2fae2f;
  border-width: 0 1px;
}

.shelf-icons .brk svg {
  width: 15px;
}

.svg-tile {
  width: 13px;
  height: 13px;
  background: #e3924c;
  color: #3a2a1a;
  font-weight: 700;
  line-height: 11px;
}

.sep {
  width: 6px;
  height: 18px;
  background: linear-gradient(#999, #999) center / 1px 100% no-repeat;
}

.shelf-scroll {
  display: flex;
  flex-direction: column;
  align-items: center;
  gap: 2px;
  width: 16px;
  padding-top: 13px;
  background: linear-gradient(#373737, #373737) top / 100% 12px no-repeat;
}

.dot {
  width: 5px;
  height: 5px;
  border-radius: 50%;
  background: #777;
}

/* main area */
main {
  flex: 1;
  display: flex;
  min-height: 0;
}

.panel-menu {
  display: flex;
  gap: 8px;
}

.toolbox {
  width: 20px;
  padding-top: 7px;
  border-right: 4px solid #3c3c3c;
}

.toolbox button {
  width: 16px;
  height: 20px;
}

.toolbox svg {
  width: 15px;
  height: 15px;
}

.toolbox .last-tool {
  height: 34px;
  margin: 12px 0 5px;
  padding-top: 8px;
  border-bottom: 2px solid #999;
}

.toolbox .light {
  height: 16px;
  margin-bottom: 3px;
  background: #aaa;
  color: #222;
}

.toolbox .light svg {
  width: 10px;
  height: 10px;
}

.outliner {
  display: flex;
  flex-direction: column;
  width: 207px;
  margin: 1px 2px 0 1px;
}

.outliner h2 {
  width: 100%;
  margin: 0;
  padding-left: 5px;
  background: linear-gradient(90deg, #484848 34px, #3a3a3a 34px);
  color: #eee;
  font-size: 6px;
  font-weight: 400;
  line-height: 10px;
}

.outliner .panel-menu {
  padding: 0 5px;
}

.search {
  display: flex;
  align-items: center;
  gap: 4px;
  margin-top: 3px;
  padding-left: 3px;
}

.search svg {
  width: 8px;
  height: 8px;
}

.search-box {
  display: flex;
  flex: 1;
  align-items: center;
  height: 10px;
  margin-right: 2px;
  padding: 0 2px;
  background: #2b2b2b;
}

.search-box input {
  flex: 1;
  min-width: 0;
}

.search-box input::placeholder {
  color: #999;
}

.tree {
  display: flex;
  flex: 1;
  background: #373737;
}

.tree ul {
  flex: 1;
  margin: 0;
  padding: 1px 0 0 20px;
  list-style: none;
}

.tree li {
  display: flex;
  align-items: center;
  gap: 1px;
  height: 11px;
}

.tree li svg {
  width: 9px;
  height: 9px;
}

.tree .dim {
  color: #7a7a7a;
}

.scrollbar {
  display: flex;
  flex-direction: column;
  align-items: center;
  width: 7px;
  margin-right: 2px;
  padding-top: 2px;
}

.scrollbar span {
  flex: 1;
  width: 5px;
  margin-top: 1px;
  background: #5a5a5a;
}

/* viewport */
.viewport {
  display: flex;
  flex: 1;
  flex-direction: column;
  min-width: 0;
  border: solid #6a6a6a;
  border-width: 2px 2px 0;
}

.viewport .panel-menu {
  gap: 9px;
  padding: 0 5px;
  line-height: 10px;
}

.panel-bar {
  display: flex;
  align-items: center;
  height: 12px;
}

.panel-bar button {
  width: 10px;
  height: 10px;
}

.panel-bar svg {
  width: 9px;
  height: 9px;
}

.panel-bar .bar {
  width: 9px;
  height: 7px;
}

.panel-bar .first {
  width: 5px;
}

.panel-bar input {
  width: 20px;
  height: 9px;
  margin: 0 2px;
  padding-left: 2px;
  background: #2b2b2b;
}

.panel-bar .drop {
  width: 76px;
  height: 9px;
  margin-left: 2px;
}

.scene {
  position: relative;
  flex: 1;
  min-height: 0;
  background: #5d5d5d;
}

.scene > svg {
  width: 100%;
  height: 100%;
}

.grid {
  fill: none;
  stroke: #4b4b4b;
}

.grid-axis {
  fill: none;
  stroke: #3c3c3c;
}

.wire {
  fill: none;
  stroke: #33336f;
  stroke-width: 0.8px;
}

.hud {
  position: absolute;
  top: -2px;
  left: 8px;
  border-collapse: collapse;
  color: #eee;
  font-size: 6px;
  font-weight: 700;
  line-height: 11px;
}

.hud th,
.hud td {
  width: 36px;
  padding: 0;
  text-align: right;
}

.hud th {
  width: 28px;
  text-align: left;
}

/* red notes with a rounded black outline */
.note {
  position: absolute;
  z-index: 2;
  color: #b00000;
  font-family: "Liberation Sans", Arial, sans-serif;
  font-size: 27px;
  line-height: 32px;
  white-space: pre;
  text-shadow:
    4px 0 #000, 4px 1px #000, 4px 2px #000, 3px 3px #000,
    2px 4px #000, 1px 4px #000, 0 4px #000, -1px 4px #000,
    -2px 4px #000, -3px 3px #000, -4px 2px #000, -4px 1px #000,
    -4px 0 #000, -4px -1px #000, -4px -2px #000, -3px -3px #000,
    -2px -4px #000, -1px -4px #000, 0 -4px #000, 1px -4px #000,
    2px -4px #000, 3px -3px #000, 4px -2px #000, 4px -1px #000,
    2px 0 #000, -2px 0 #000, 0 2px #000, 0 -2px #000;
}

.note-interior {
  left: 72px;
  bottom: 133px;
}

.note-outline {
  top: 30px;
  right: -92px;
}

.indent {
  padding-left: 19px;
}

/* modeling toolkit */
.toolkit {
  display: flex;
  flex-direction: column;
  width: 163px;
  padding: 1px 4px 0 6px;
  border-left: 3px solid #3a3a3a;
}

.toolkit .panel-menu {
  padding-left: 0;
}

.multi {
  width: 86px;
  height: 14px;
  margin: 6px 0 2px 31px;
  background: #5d5d5d;
  color: #eee;
  font-weight: 600;
}

.modes {
  display: flex;
  padding-left: 3px;
}

.modes button {
  width: 28px;
  height: 21px;
}

.modes svg {
  width: 16px;
  height: 16px;
}

.options {
  margin-top: 20px;
}

.options label {
  display: flex;
  align-items: center;
  gap: 4px;
  height: 11px;
  padding-left: 2px;
}

.options input {
  width: 5px;
  height: 5px;
  border-radius: 50%;
  background: #2b2b2b;
}

.options input:checked {
  border: 1px solid #2b2b2b;
  background: #eee;
}

.options .check {
  gap: 3px;
  padding-left: 3px;
}

.options .check input {
  width: 8px;
  height: 8px;
  border: 0;
  border-radius: 0;
  background: #1c1c1c;
}

.check input::after {
  content: "";
  display: block;
  width: 3px;
  height: 6px;
  margin-left: 3px;
  border: solid #fff;
  border-width: 0 1px 1px 0;
  transform: rotate(40deg);
}

.constraints {
  display: flex;
  flex-direction: column;
  gap: 5px;
  margin-top: 6px;
}

.row {
  display: flex;
  align-items: center;
  gap: 4px;
  height: 11px;
}

.row .field {
  flex: 1;
  height: 11px;
  padding-left: 3px;
  background: #404040;
}

.row input {
  width: 32px;
  height: 11px;
  padding-left: 3px;
  background: #404040;
  color: #777;
}

.strip {
  height: 11px;
  margin-top: 5px;
  background: #3a3a3a;
}

.toolkit h3 {
  display: flex;
  align-items: center;
  gap: 5px;
  height: 11px;
  margin: 4px 0 2px -2px;
  padding-left: 4px;
  background: #3a3a3a;
  font-size: 6px;
  font-weight: 400;
  color: #ddd;
}

.strip + h3 {
  margin-top: 6px;
}

.cmds {
  display: grid;
  grid-template-columns: 1fr 1fr;
  gap: 1px;
  margin-left: -1px;
}

.cmds button {
  justify-content: flex-start;
  gap: 4px;
  height: 15px;
  padding-left: 3px;
  background: #5d5d5d;
  color: #eee;
  font-weight: 600;
}

.cmds svg {
  width: 11px;
  height: 11px;
}

.move {
  display: flex;
  gap: 4px;
}

.pivot {
  display: flex;
  flex: 1;
  flex-direction: column;
  justify-content: space-between;
  padding-top: 4px;
}

.pivot-row {
  display: flex;
  align-items: center;
  gap: 5px;
  padding-left: 2px;
}

.pivot .field {
  flex: 1;
  height: 14px;
  padding-left: 3px;
}

.edit-pivot {
  height: 13px;
  background: #5d5d5d;
  color: #eee;
  font-weight: 600;
}

.handle {
  width: 9px;
  background: #5d5d5d;
}

.axes {
  display: flex;
  flex-direction: column;
  gap: 1px;
  margin-left: -3px;
}

.axes label {
  display: flex;
  gap: 3px;
  height: 12px;
}

.axes b {
  width: 12px;
  color: #111;
  text-align: center;
}

.axes input {
  width: 44px;
  padding-left: 1px;
  background: #404040;
  color: #808080;
}

.x b { background: #ff4a4a; }
.y b { background: #4aff86; }
.z b { background: #2f63ff; }

.snap {
  margin-top: 7px;
}

.snap input {
  width: 44px;
}

.grip {
  width: 53px;
  margin: 13px auto 0;
  border-top: 1px dotted #777;
}

.toolkit .custom {
  margin-top: 5px;
  padding-left: 3px;
  color: #eee;
  font-weight: 600;
}

.custom-shelf {
  display: flex;
  margin-left: -1px;
}

.custom-shelf button {
  width: 18px;
  height: 16px;
}

.custom-shelf svg {
  width: 14px;
  height: 14px;
}

/* vertical tabs on the right edge */
.side-tabs {
  display: flex;
  flex-direction: column;
  gap: 2px;
  width: 9px;
  padding-top: 1px;
  background: #333;
}

.side-tabs a {
  padding: 6px 0 5px;
  background: #3c3c3c;
  color: #999;
  line-height: 9px;
  writing-mode: vertical-rl;
}

.side-tabs .active {
  background: #444;
  color: #eee;
  font-weight: 600;
}
```
